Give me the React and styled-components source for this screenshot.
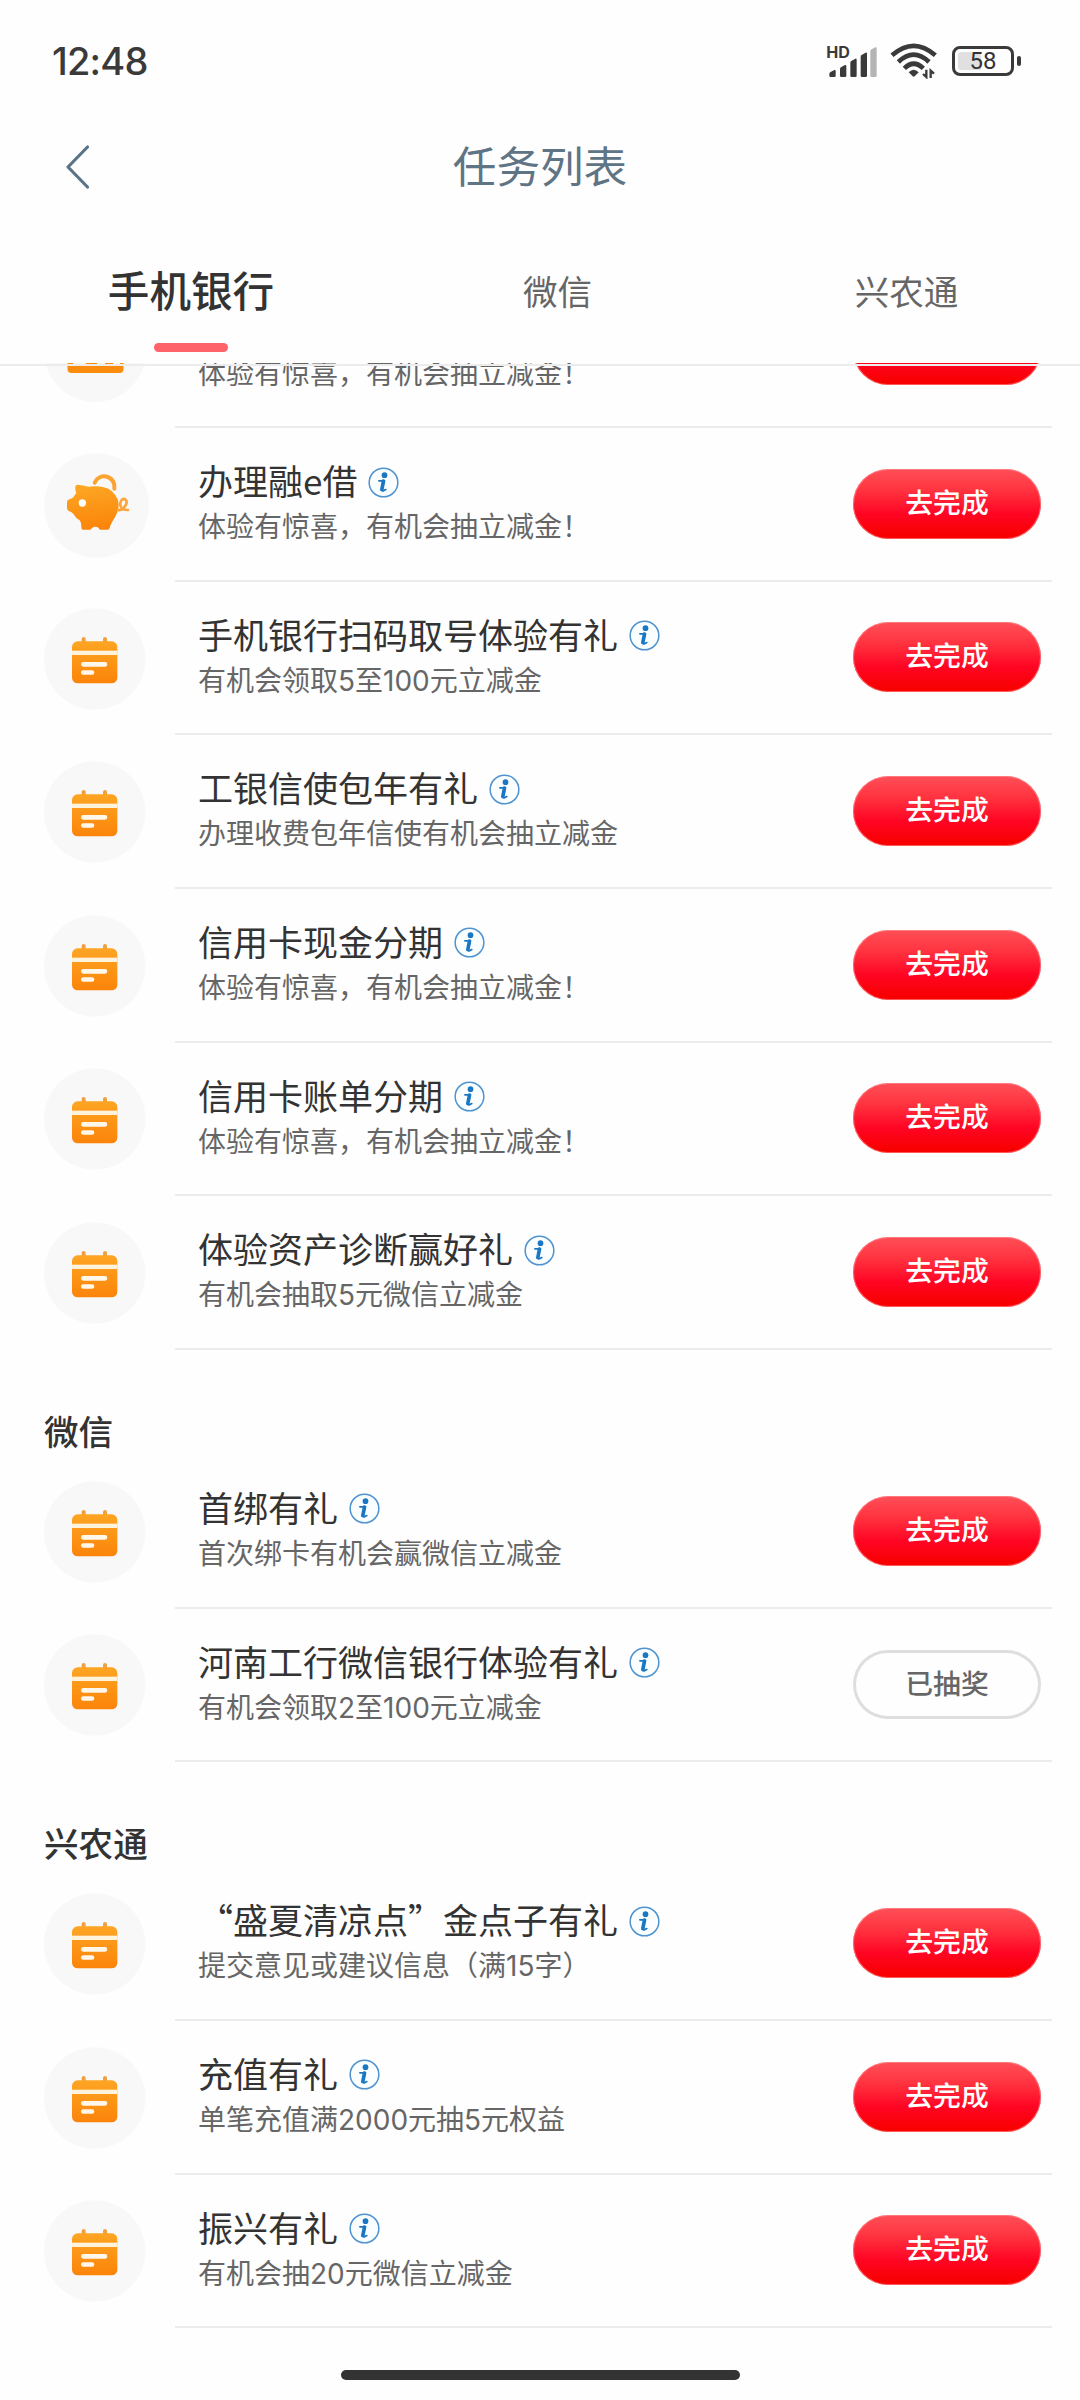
import React, { useState } from 'react'
import styled, { createGlobalStyle, css } from 'styled-components'

const cjk = `"Noto Sans CJK SC", sans-serif`;

const tabs = ['手机银行', '微信', '兴农通'];

const groups = [
    {
        title: null,
        tasks: [
            { icon: 'card', name: '办理信用卡', desc: '体验有惊喜，有机会抽立减金！' },
            { icon: 'pig', name: '办理融e借', desc: '体验有惊喜，有机会抽立减金！' },
            { icon: 'calendar', name: '手机银行扫码取号体验有礼', desc: '有机会领取5至100元立减金' },
            { icon: 'calendar', name: '工银信使包年有礼', desc: '办理收费包年信使有机会抽立减金' },
            { icon: 'calendar', name: '信用卡现金分期', desc: '体验有惊喜，有机会抽立减金！' },
            { icon: 'calendar', name: '信用卡账单分期', desc: '体验有惊喜，有机会抽立减金！' },
            { icon: 'calendar', name: '体验资产诊断赢好礼', desc: '有机会抽取5元微信立减金' },
        ],
    },
    {
        title: '微信',
        tasks: [
            { icon: 'calendar', name: '首绑有礼', desc: '首次绑卡有机会赢微信立减金' },
            { icon: 'calendar', name: '河南工行微信银行体验有礼', desc: '有机会领取2至100元立减金', done: true },
        ],
    },
    {
        title: '兴农通',
        tasks: [
            { icon: 'calendar', name: '“盛夏清凉点”金点子有礼', desc: '提交意见或建议信息（满15字）' },
            { icon: 'calendar', name: '充值有礼', desc: '单笔充值满2000元抽5元权益' },
            { icon: 'calendar', name: '振兴有礼', desc: '有机会抽20元微信立减金' },
        ],
    },
];

function SignalIcon() {
    return (
        <svg width="52" height="40" viewBox="81 25 156 120">
            <text x="81.500" y="81" fontSize="47" fontWeight="700" fontFamily="Inter, sans-serif" fill="#3a3a3a" textLength="71" lengthAdjust="spacingAndGlyphs">HD</text>
            <g fill="#3a3a3a">
                <path d="M91 130q0-4 4-6l11-6q4-1 4 3v14q0 4-4 4H95q-4 0-4-4z" />
                <path d="M123 115q0-4 4-6l11-6q4-1 4 3v29q0 4-4 4h-11q-4 0-4-4z" />
                <path d="M154 96q0-4 4-6l11-6q4-1 4 3v48q0 4-4 4h-11q-4 0-4-4z" />
                <path d="M185 78q0-4 4-6l11-6q4-1 4 3v66q0 4-4 4h-11q-4 0-4-4z" />
            </g>
            <path d="M214 62q0-4 4-6l11-6q4-1 4 3v82q0 4-4 4h-11q-4 0-4-4z" fill="#b4b4b4" />
        </svg>
    )
}

function WifiIcon() {
    return (
        <svg width="47" height="36" viewBox="271 42 141 108">
            <g fill="none" stroke="#3a3a3a" strokeWidth="14">
                <path d="M277 79Q342 22 407 79" />
                <path d="M296 99Q342 55 388 99" />
                <path d="M314 118Q342 90 371 118" />
            </g>
            <path d="M327 130Q342 115 357 130L345 142q-3 2-6 0z" fill="#3a3a3a" />
            <path d="M380 122v22l-10-9M393 147v-22l10 9" fill="none" stroke="#3a3a3a" strokeWidth="7" />
        </svg>
    )
}

function CardIcon() {
    return (
        <svg width="102" height="102" viewBox="0 0 102 102">
            <circle cx="51" cy="51" r="51" fill="#f8f8f8" />
            <path d="M23.500 32q0-4 4-4h48q4 0 4 4v5h-56zM23.500 43h56v26q0 4-4 4h-48q-4 0-4-4z" fill="#fc8c0d" />
            <path d="M29 63h13M53 63h8M69 63h7" stroke="#fff6e6" strokeWidth="2" />
        </svg>
    )
}

function PigIcon() {
    return (
        <svg width="105" height="105" viewBox="39 37 315 315">
            <defs>
                <linearGradient id="pig" x1="0" y1="0" x2="0.15" y2="1">
                    <stop offset="0" stopColor="#fda925" />
                    <stop offset="1" stopColor="#fb860b" />
                </linearGradient>
            </defs>
            <circle cx="196.500" cy="194.500" r="157" fill="#f8f8f8" />
            <path d="M191 126A31 31 0 0 1 250 144" fill="none" stroke="#fba231" strokeWidth="12" strokeLinecap="round" />
            <path
                d="M133 138q0-6 7-6 16 1 32 6 12-2 26-1 38 1 55 26 10 14 10 28 0 22-12 40-8 12-13 24-2 12-8 12h-22q-4 0-5-5-3-4-10-4t-10 4q-2 5-6 5h-20q-6 0-6-6 1-14-5-22-12-6-18-18-6-8-14-10-6-2-6-10v-16q0-7 7-9 8-1 12-6 4-7 9-13-4-10-3-19z"
                fill="url(#pig)"
            />
            <circle cx="154" cy="187" r="11" fill="#fff" />
            <path d="M261 208q10 2 17-6 12-14 8-22-5-8-13-3-8 8-4 20 4 11 22 11" fill="none" stroke="#fba53a" strokeWidth="8" strokeLinecap="round" />
        </svg>
    )
}

function CalendarIcon() {
    return (
        <svg width="102" height="102" viewBox="42 50 306 306">
            <defs>
                <linearGradient id="cal" x1="0" y1="0" x2="0" y2="1">
                    <stop offset="0" stopColor="#fea523" />
                    <stop offset="1" stopColor="#fb840a" />
                </linearGradient>
            </defs>
            <circle cx="194" cy="203" r="152" fill="#f8f8f8" />
            <path d="M161 143v14M225 143v14" stroke="#f0a040" strokeWidth="12" strokeLinecap="round" />
            <rect x="126" y="150" width="136" height="126" rx="17" fill="url(#cal)" />
            <rect x="126" y="178" width="136" height="13" fill="#fff3dc" />
            <path d="M160 219h65M160 243.500h26" stroke="#fff8ea" strokeWidth="14" strokeLinecap="round" />
        </svg>
    )
}

function InfoIcon() {
    return (
        <svg width="31" height="31" viewBox="-46.5 -46.5 93 93">
            <circle r="43" fill="#fbfeff" stroke="#4f93cf" strokeWidth="4.5" />
            <circle cx="3" cy="-22" r="8.500" fill="#1a77c4" />
            <path d="M-14-5H2L-5 20q-1 6 4 5l8-4" fill="none" stroke="#1a77c4" strokeWidth="5" strokeLinecap="round" />
            <path d="M0-4L-5 21" stroke="#1a77c4" strokeWidth="11" strokeLinecap="round" />
        </svg>
    )
}

const icons = { card: CardIcon, pig: PigIcon, calendar: CalendarIcon };

function Task({ task }) {
    const Icon = icons[task.icon];
    return (
        <Row>
            <IconBox><Icon /></IconBox>
            <RowBody>
                <Texts>
                    <Name>{task.name}<InfoIcon /></Name>
                    <Desc>{task.desc}</Desc>
                </Texts>
                <Action $done={task.done}>{task.done ? '已抽奖' : '去完成'}</Action>
            </RowBody>
        </Row>
    )
}

export default function App() {
    const [current, setCurrent] = useState(0);

    return (
        <Page>
            <GlobalStyle />
            <StatusBar>
                <Clock>12:48</Clock>
                <StatusIcons>
                    <SignalIcon />
                    <WifiIcon />
                    <Battery>
                        <BatteryBody><span>58</span></BatteryBody>
                        <BatteryCap />
                    </Battery>
                </StatusIcons>
            </StatusBar>
            <NavBar>
                <Back>
                    <svg width="26" height="48" viewBox="0 0 26 48">
                        <path d="M23.500 4L4 24l19.500 20" fill="none" stroke="#5a7487" strokeWidth="3.2" strokeLinecap="round" strokeLinejoin="round" />
                    </svg>
                </Back>
                <Title>任务列表</Title>
            </NavBar>
            <Tabs>
                {tabs.map((tab, index) => (
                    <Tab key={tab} $active={index === current} onClick={() => setCurrent(index)}>
                        {tab}
                    </Tab>
                ))}
            </Tabs>
            <Viewport>
                <List>
                    {groups.map((group, index) => (
                        <section key={index}>
                            {group.title && <GroupTitle>{group.title}</GroupTitle>}
                            {group.tasks.map((task) => <Task key={task.name} task={task} />)}
                        </section>
                    ))}
                </List>
            </Viewport>
            <HomeBar><HomePill /></HomeBar>
        </Page>
    )
}

const GlobalStyle = createGlobalStyle`
    body {
        margin: 0;
        background: #fefefe;
    }
    * {
        box-sizing: border-box;
    }
    svg {
        display: block;
        flex: none;
    }
`;

const Page = styled.div`
    width: 1080px;
    height: 2400px;
    display: flex;
    flex-direction: column;
    overflow: hidden;
    background: #fefefe;
    color: #333;
    font-family: ${cjk};
`;

const StatusBar = styled.div`
    height: 122px;
    flex: none;
    display: flex;
    align-items: center;
    justify-content: space-between;
    padding: 0 59px 0 52px;
`;

const Clock = styled.div`
    font: 500 38px/46px Inter, sans-serif;
    letter-spacing: -0.8px;
    color: #3a3a3a;
`;

const StatusIcons = styled.div`
    display: flex;
    align-items: center;
    gap: 12px;

    > svg:first-child {
        margin-top: -5px;
    }
`;

const Battery = styled.div`
    display: flex;
    align-items: center;
    gap: 3px;
    margin-left: 3px;
`;

const BatteryBody = styled.div`
    width: 62px;
    height: 30px;
    border: 3px solid #3a3a3a;
    border-radius: 8px;
    padding: 3px;

    span {
        display: block;
        height: 18px;
        border-radius: 3px;
        background: linear-gradient(90deg, #e0e0e0 46%, transparent 46%);
        font: 400 24px/19px Roboto, sans-serif;
        color: #333;
        text-align: center;
    }
`;

const BatteryCap = styled.div`
    width: 4px;
    height: 10px;
    border-radius: 2px;
    background: #3a3a3a;
`;

const NavBar = styled.div`
    height: 90px;
    flex: none;
    display: grid;
    grid-template-columns: 150px 1fr 150px;
    align-items: center;
`;

const Back = styled.div`
    padding-left: 64px;
`;

const Title = styled.div`
    font-size: 43.6px;
    line-height: 60px;
    text-align: center;
    color: #5f7484;
    margin-top: -7px;
`;

const Tabs = styled.div`
    height: 151px;
    flex: none;
    display: grid;
    grid-template-columns: 382px 350px 348px;
`;

const Tab = styled.div`
    display: flex;
    flex-direction: column;
    align-items: center;
    padding: 48px 0 0 1px;
    font-size: 34.6px;
    line-height: 60px;
    color: #666;

    ${(props) => props.$active && css`
        padding: 47px 0 0;
        font-size: 41.6px;
        font-weight: 500;
        color: #333;

        &::after {
            content: '';
            width: 74px;
            height: 9px;
            margin-top: 24px;
            border-radius: 5px;
            background: #fd6369;
        }
    `}
`;

/* the header hairline stays above the scrolled rows */
const Viewport = styled.div`
    flex: 1;
    min-height: 0;
    position: relative;
    overflow: hidden;

    &::before {
        content: '';
        position: absolute;
        top: 1px;
        left: 0;
        right: 0;
        height: 2px;
        background: #ececec;
    }
`;

const List = styled.div`
    margin-top: -88.4px;
`;

const GroupTitle = styled.h2`
    margin: 0;
    height: 105.2px;
    padding: 54px 0 0 44px;
    font-size: 34.6px;
    font-weight: 500;
    line-height: 52px;
`;

const Row = styled.div`
    height: 153.6px;
    display: flex;
    padding: 0 28px 0 44px;
`;

const IconBox = styled.div`
    width: 131px;
    flex: none;
    display: flex;
    align-items: center;
`;

const RowBody = styled.div`
    flex: 1;
    display: flex;
    justify-content: space-between;
    padding: 0 11px 0 23px;
    border-bottom: 2px solid #ececec;
`;

const Texts = styled.div`
    padding-top: 29px;
`;

const Name = styled.div`
    display: flex;
    align-items: center;
    gap: 11px;
    font-size: 35px;
    line-height: 46px;
    height: 46px;

    svg {
        margin-top: 4px;
    }
`;

const Desc = styled.div`
    margin-top: 4px;
    font-family: Inter, ${cjk};
    font-size: 28px;
    line-height: 40px;
    color: #666;
`;

const Action = styled.div`
    width: 188px;
    height: 70px;
    margin-top: 40.6px;
    border-radius: 35px;
    font-size: 27.8px;
    font-weight: 500;
    line-height: 65px;
    text-align: center;
    color: #fff;
    background: linear-gradient(#ff4f57, #ff3440 30%, #ff0524 64%, #f80000 96%);
    box-shadow: inset 0 0 0 1px rgba(255, 150, 150, 0.6);

    ${(props) => props.$done && css`
        height: 69px;
        margin-top: 41.4px;
        line-height: 64px;
        color: #666;
        background: none;
        box-shadow: inset 0 0 0 3px #dedede;
    `}
`;

const HomeBar = styled.div`
    height: 72px;
    flex: none;
    display: flex;
    justify-content: center;
    padding-top: 42px;
`;

const HomePill = styled.div`
    width: 399px;
    height: 10px;
    border-radius: 5px;
    background: #333;
`;
